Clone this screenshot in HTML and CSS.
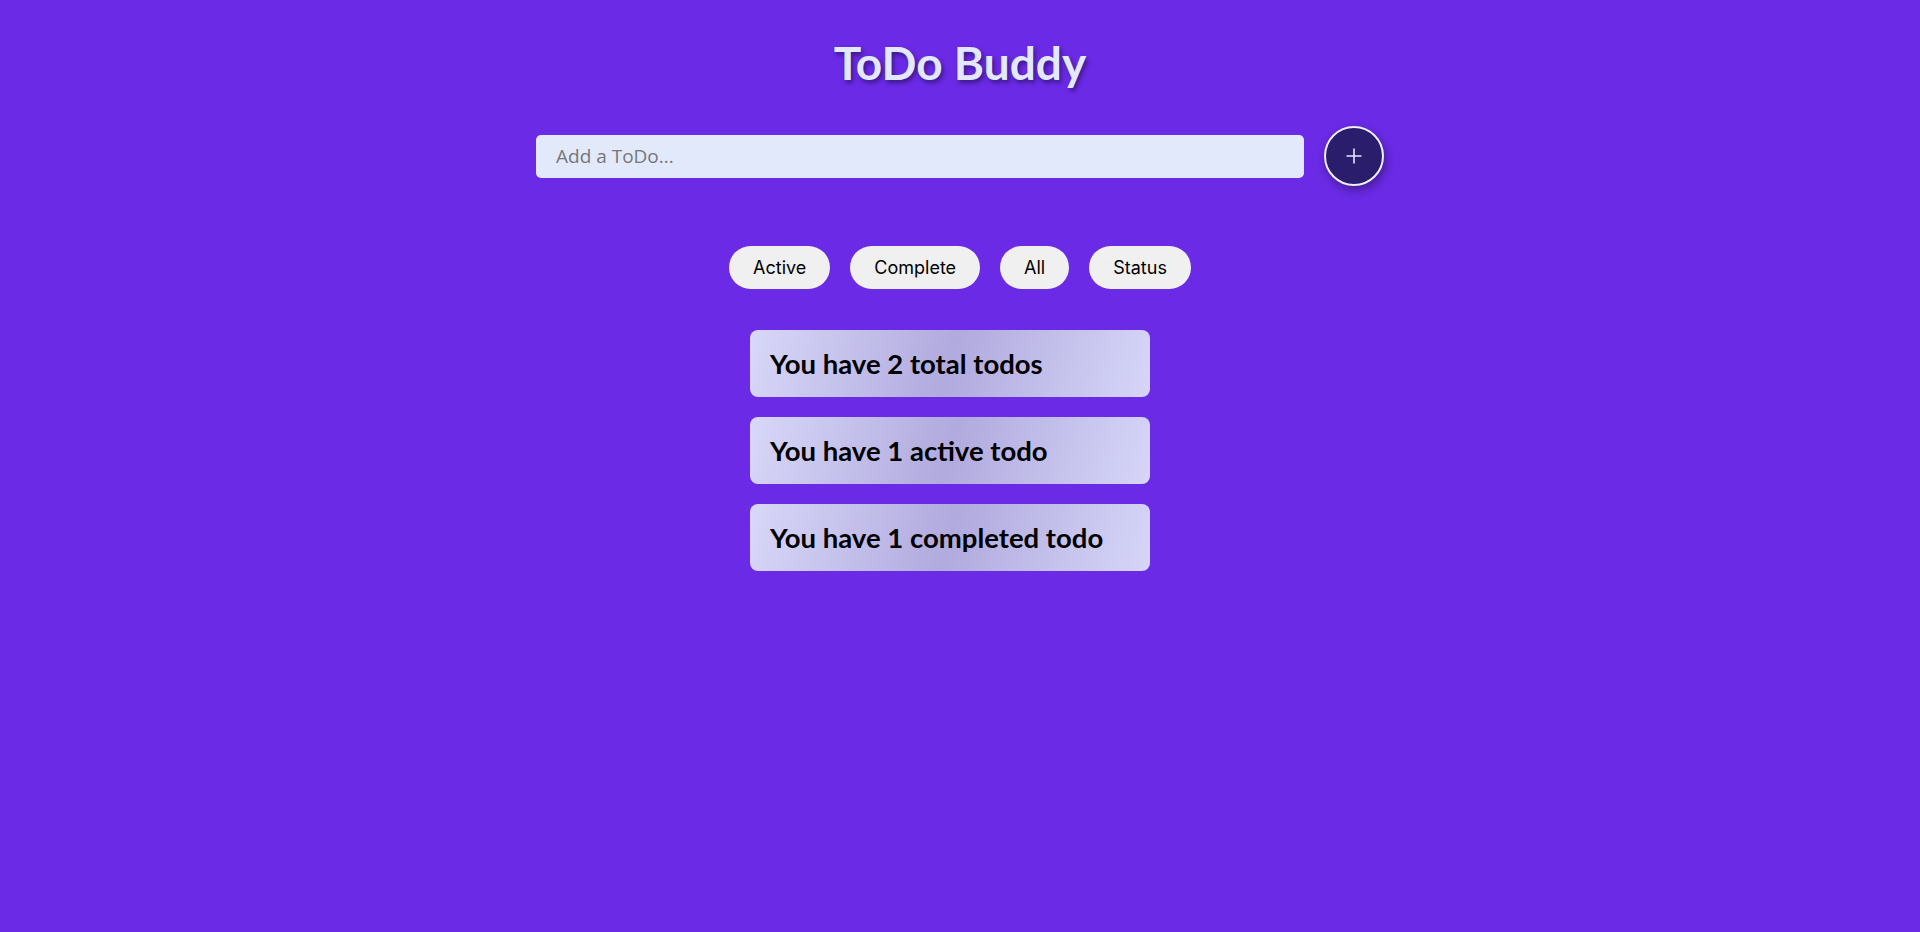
FILE: index.html
```html
<!DOCTYPE html>
<html lang="en">
<head>
<meta charset="utf-8">
<title>ToDo Buddy</title>
<link rel="stylesheet" href="styles.css">
</head>
<body>
<main class="app">
  <h1 class="title">ToDo Buddy</h1>
  <form class="add-row">
    <input class="add-input" type="text" placeholder="Add a ToDo...">
    <button class="add-btn" type="button" aria-label="Add">
      <svg width="16" height="16" viewBox="0 0 16 16"><path d="M8 0.5V15.5M0.5 8H15.5" stroke="#e6e8ff" stroke-width="1.6" fill="none"/></svg>
    </button>
  </form>
  <nav class="filters">
    <button class="filter" type="button">Active</button>
    <button class="filter" type="button">Complete</button>
    <button class="filter" type="button">All</button>
    <button class="filter" type="button">Status</button>
  </nav>
  <section class="stats">
    <div class="stat">You have 2 total todos</div>
    <div class="stat">You have 1 active todo</div>
    <div class="stat">You have 1 completed todo</div>
  </section>
</main>
</body>
</html>
```
FILE: styles.css
```css
html, body {
  margin: 0;
  padding: 0;
}
body {
  background: #6b2ae6;
  min-height: 100vh;
  font-family: "Lato", "Open Sans", sans-serif;
}
.app {
  display: flex;
  flex-direction: column;
  align-items: center;
}
.title {
  margin: 35px 0 0;
  font-family: "Lato", sans-serif;
  font-weight: 700;
  font-size: 46px;
  line-height: 56px;
  color: #e2e8ff;
  text-shadow: 2px 3px 4px rgba(20, 10, 60, 0.55);
}
.add-row {
  display: flex;
  align-items: center;
  gap: 20px;
  margin-top: 35px;
}
.add-input {
  width: 768px;
  height: 43px;
  box-sizing: border-box;
  border: none;
  border-radius: 5px;
  background: #e1e9fb;
  padding: 0 20px;
  font-family: "Open Sans", sans-serif;
  font-size: 19px;
  color: #333;
  outline: none;
}
.add-input::placeholder {
  color: #777;
}
.add-btn {
  width: 60px;
  height: 60px;
  box-sizing: border-box;
  border-radius: 50%;
  border: 2px solid #eef0ff;
  background: #2a1e6c;
  display: flex;
  align-items: center;
  justify-content: center;
  padding: 0;
  box-shadow: 2px 4px 10px rgba(20, 10, 50, 0.45);
  cursor: pointer;
}
.filters {
  display: flex;
  gap: 20px;
  margin-top: 60px;
}
.filter {
  height: 43px;
  padding: 0 24px;
  border: none;
  border-radius: 22px;
  background: #f0f0f0;
  font-family: "Inter", sans-serif;
  font-size: 18px;
  color: #000;
  cursor: pointer;
}
.stats {
  display: flex;
  flex-direction: column;
  gap: 20px;
  margin-top: 41px;
  margin-right: 20px;
}
.stat {
  width: 400px;
  height: 67px;
  box-sizing: border-box;
  padding: 0 20px;
  display: flex;
  align-items: center;
  border-radius: 8px;
  background: linear-gradient(105deg, #d8d8f9 0%, #b1aade 50%, #d6d6f8 100%);
  font-family: "Lato", sans-serif;
  font-weight: 700;
  font-size: 27.5px;
  color: #000;
}
```
